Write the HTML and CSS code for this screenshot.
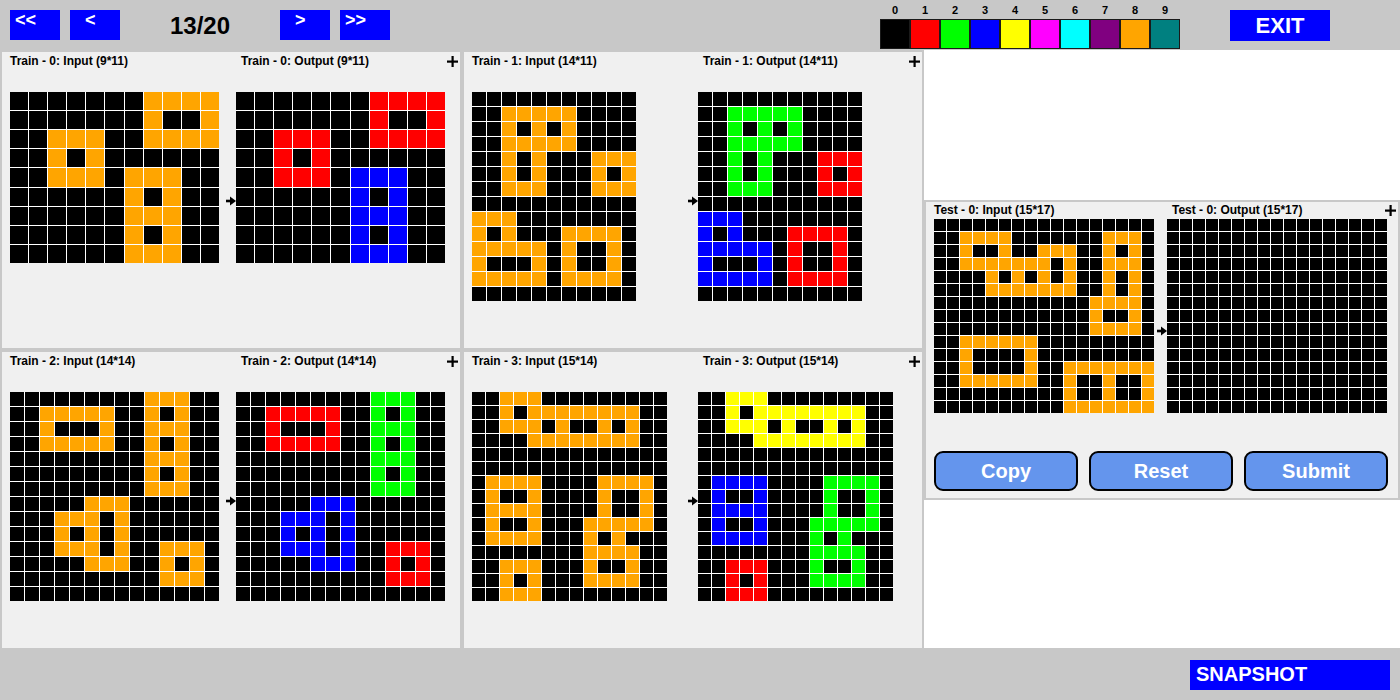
FILE: index.html
```html
<!DOCTYPE html>
<html>
<head>
<meta charset="utf-8">
<title>ARC Task 13/20</title>
<link rel="stylesheet" href="styles.css">
</head>
<body>
<div class="app">
  <header class="topbar">
    <div class="nav-btn nav-wide">&lt;&lt;</div>
    <div class="nav-btn nav-narrow">&lt;</div>
    <div class="counter">13/20</div>
    <div class="nav-btn nav-narrow">&gt;</div>
    <div class="nav-btn nav-wide">&gt;&gt;</div>
    <div class="palette">
      <div class="swatch"><span class="swatch-num">0</span><span class="swatch-box c0"></span></div>
      <div class="swatch"><span class="swatch-num">1</span><span class="swatch-box c1"></span></div>
      <div class="swatch"><span class="swatch-num">2</span><span class="swatch-box c2"></span></div>
      <div class="swatch"><span class="swatch-num">3</span><span class="swatch-box c3"></span></div>
      <div class="swatch"><span class="swatch-num">4</span><span class="swatch-box c4"></span></div>
      <div class="swatch"><span class="swatch-num">5</span><span class="swatch-box c5"></span></div>
      <div class="swatch"><span class="swatch-num">6</span><span class="swatch-box c6"></span></div>
      <div class="swatch"><span class="swatch-num">7</span><span class="swatch-box c7"></span></div>
      <div class="swatch"><span class="swatch-num">8</span><span class="swatch-box c8"></span></div>
      <div class="swatch"><span class="swatch-num">9</span><span class="swatch-box c9"></span></div>
    </div>
    <div class="exit-btn">EXIT</div>
  </header>

  <main class="main">
    <section class="train-area">
      <div class="panel">
        <div class="side side-in">
          <div class="label">Train - 0: Input (9*11)</div>
          <div class="grid" data-grid="t0i" data-size="209"></div>
        </div>
        <div class="arrow-col"><svg class="arrow" viewBox="0 0 10 10" width="10" height="10"><rect x="0" y="3.7" width="6" height="2.6"/><polygon points="4,0.5 10,5 4,9.5"/></svg></div>
        <div class="side side-out">
          <div class="label-row"><span class="label">Train - 0: Output (9*11)</span><svg class="plus" viewBox="0 0 11 11" width="11" height="11"><rect x="4.5" y="0" width="2.2" height="11"/><rect x="0" y="4.5" width="11" height="2.2"/></svg></div>
          <div class="grid" data-grid="t0o" data-size="209"></div>
        </div>
      </div>

      <div class="panel">
        <div class="side side-in">
          <div class="label">Train - 1: Input (14*11)</div>
          <div class="grid" data-grid="t1i" data-size="209"></div>
        </div>
        <div class="arrow-col"><svg class="arrow" viewBox="0 0 10 10" width="10" height="10"><rect x="0" y="3.7" width="6" height="2.6"/><polygon points="4,0.5 10,5 4,9.5"/></svg></div>
        <div class="side side-out">
          <div class="label-row"><span class="label">Train - 1: Output (14*11)</span><svg class="plus" viewBox="0 0 11 11" width="11" height="11"><rect x="4.5" y="0" width="2.2" height="11"/><rect x="0" y="4.5" width="11" height="2.2"/></svg></div>
          <div class="grid" data-grid="t1o" data-size="209"></div>
        </div>
      </div>

      <div class="panel">
        <div class="side side-in">
          <div class="label">Train - 2: Input (14*14)</div>
          <div class="grid" data-grid="t2i" data-size="209"></div>
        </div>
        <div class="arrow-col"><svg class="arrow" viewBox="0 0 10 10" width="10" height="10"><rect x="0" y="3.7" width="6" height="2.6"/><polygon points="4,0.5 10,5 4,9.5"/></svg></div>
        <div class="side side-out">
          <div class="label-row"><span class="label">Train - 2: Output (14*14)</span><svg class="plus" viewBox="0 0 11 11" width="11" height="11"><rect x="4.5" y="0" width="2.2" height="11"/><rect x="0" y="4.5" width="11" height="2.2"/></svg></div>
          <div class="grid" data-grid="t2o" data-size="209"></div>
        </div>
      </div>

      <div class="panel">
        <div class="side side-in">
          <div class="label">Train - 3: Input (15*14)</div>
          <div class="grid" data-grid="t3i" data-size="209"></div>
        </div>
        <div class="arrow-col"><svg class="arrow" viewBox="0 0 10 10" width="10" height="10"><rect x="0" y="3.7" width="6" height="2.6"/><polygon points="4,0.5 10,5 4,9.5"/></svg></div>
        <div class="side side-out">
          <div class="label-row"><span class="label">Train - 3: Output (15*14)</span><svg class="plus" viewBox="0 0 11 11" width="11" height="11"><rect x="4.5" y="0" width="2.2" height="11"/><rect x="0" y="4.5" width="11" height="2.2"/></svg></div>
          <div class="grid" data-grid="t3o" data-size="209"></div>
        </div>
      </div>
    </section>

    <aside class="test-col">
      <div class="test-panel">
        <div class="test-pair">
          <div class="side test-in">
            <div class="label">Test - 0: Input (15*17)</div>
            <div class="grid" data-grid="x0i" data-size="220"></div>
          </div>
          <div class="arrow-col test-arrow"><svg class="arrow" viewBox="0 0 10 10" width="10" height="10"><rect x="0" y="3.7" width="6" height="2.6"/><polygon points="4,0.5 10,5 4,9.5"/></svg></div>
          <div class="side side-out">
            <div class="label-row"><span class="label">Test - 0: Output (15*17)</span><svg class="plus" viewBox="0 0 11 11" width="11" height="11"><rect x="4.5" y="0" width="2.2" height="11"/><rect x="0" y="4.5" width="11" height="2.2"/></svg></div>
            <div class="grid" data-grid="x0o" data-size="220"></div>
          </div>
        </div>
        <div class="actions">
          <button class="act-btn">Copy</button>
          <button class="act-btn">Reset</button>
          <button class="act-btn">Submit</button>
        </div>
      </div>
    </aside>
  </main>

  <footer class="bottombar">
    <div class="snap-btn">SNAPSHOT</div>
  </footer>
</div>
<script src="script.js"></script>
</body>
</html>
```

FILE: styles.css
```css
* { box-sizing: border-box; }

body {
  margin: 0;
  width: 1400px;
  height: 700px;
  overflow: hidden;
  background: #c8c8c8;
  font-family: "Liberation Sans", Arial, sans-serif;
}

.app {
  display: flex;
  flex-direction: column;
  width: 1400px;
  height: 700px;
}

/* ---------- top bar ---------- */
.topbar {
  height: 50px;
  flex: none;
  display: flex;
  align-items: flex-start;
  padding-left: 10px;
}

.nav-btn {
  width: 50px;
  height: 30px;
  margin-top: 10px;
  background: #0000ff;
  color: #fff;
  font-weight: bold;
  font-size: 18px;
  line-height: 21px;
}
.nav-btn + .nav-btn { margin-left: 10px; }
.nav-wide { padding-left: 5px; }
.nav-narrow { padding-left: 15px; }

.counter {
  width: 160px;
  margin-top: 12px;
  text-align: center;
  font-weight: bold;
  font-size: 24px;
  line-height: 28px;
  color: #000;
}

.palette {
  display: flex;
  margin-left: 490px;
  margin-top: 4px;
}
.swatch {
  display: flex;
  flex-direction: column;
  align-items: center;
  width: 30px;
}
.swatch-num {
  font-size: 11px;
  font-weight: bold;
  line-height: 13px;
  height: 13px;
  margin-bottom: 2px;
  color: #000;
}
.swatch-box {
  display: block;
  width: 30px;
  height: 30px;
  border: 1px solid #1a1a1a;
}

.exit-btn {
  width: 100px;
  height: 31px;
  margin-top: 10px;
  margin-left: 50px;
  background: #0000ff;
  color: #fff;
  font-weight: bold;
  font-size: 22px;
  line-height: 31px;
  text-align: center;
}

/* ---------- main ---------- */
.main {
  height: 598px;
  flex: none;
  display: flex;
  gap: 2px;
}

.train-area {
  width: 922px;
  display: grid;
  grid-template-columns: 460px 460px;
  grid-template-rows: 298px 298px;
  gap: 2px;
}

.panel {
  display: flex;
  background: #f0f0f0;
  border-top: 2px solid #c8c8c8;
  border-left: 2px solid #c8c8c8;
  padding: 2px 2px 0 8px;
}

.side { display: flex; flex-direction: column; }
.side-in { width: 216px; }
.side-out { flex: 1; }

.label {
  font-size: 12px;
  font-weight: bold;
  line-height: 14px;
  color: #000;
  white-space: nowrap;
}
.label-row {
  display: flex;
  justify-content: space-between;
  align-items: center;
  padding-left: 5px;
}
.plus { fill: #000; display: block; }

.panel .grid { margin-top: 24px; }

.arrow-col {
  width: 10px;
  display: flex;
  align-items: center;
}
.arrow { display: block; fill: #000; }

.grid {
  display: grid;
  gap: 1px;
  background: #fff;
}
.cell { min-width: 0; min-height: 0; }

.c0 { background: #000000; }
.c1 { background: #ff0000; }
.c2 { background: #00ff00; }
.c3 { background: #0000ff; }
.c4 { background: #ffff00; }
.c5 { background: #ff00ff; }
.c6 { background: #00ffff; }
.c7 { background: #800080; }
.c8 { background: #ffa500; }
.c9 { background: #008080; }

/* ---------- test column ---------- */
.test-col {
  flex: 1;
  background: #fff;
  padding-top: 150px;
}
.test-panel {
  height: 300px;
  background: #f0f0f0;
  border: 2px solid #c8c8c8;
  padding: 1px 0 0 8px;
}
.test-pair { display: flex; }
.test-in { width: 223px; }
.test-pair .grid { margin-top: 2px; }
.test-pair .label-row { padding-right: 2px; }
.test-arrow {
  align-items: flex-start;
  padding-top: 123px;
}

.actions {
  display: flex;
  gap: 11px;
  margin-top: 38px;
}
.act-btn {
  width: 144px;
  height: 40px;
  padding: 0;
  background: #6495ed;
  border: 2px solid #000;
  border-radius: 9px;
  color: #fff;
  font-family: "Liberation Sans", Arial, sans-serif;
  font-size: 20px;
  font-weight: bold;
}

/* ---------- bottom ---------- */
.bottombar {
  flex: 1;
  display: flex;
  justify-content: flex-end;
  align-items: flex-start;
  padding: 12px 10px 0 0;
}
.snap-btn {
  width: 200px;
  height: 30px;
  background: #0000ff;
  color: #fff;
  font-weight: bold;
  font-size: 20px;
  line-height: 23px;
  padding: 3px 0 0 6px;
}
```

FILE: script.js
```js
var DATA = {
  t0i: ["00000008888","00000008008","00888008888","00808000000","00888088800","00000080800","00000088800","00000080800","00000088800"],
  t0o: ["00000001111","00000001001","00111001111","00101000000","00111033300","00000030300","00000033300","00000030300","00000033300"],
  t1i: ["00000000000","00888880000","00808080000","00888880000","00808000888","00808000808","00888000888","00000000000","88800000000","80800088880","88888080080","80008080080","88888088880","00000000000"],
  t1o: ["00000000000","00222220000","00202020000","00222220000","00202000111","00202000101","00222000111","00000000000","33300000000","30300011110","33333010010","30003010010","33333011110","00000000000"],
  t2i: ["00000000088800","00888880080800","00800080088800","00888880080800","00000000088800","00000000080800","00000000088800","00000888000000","00088808000000","00080808000000","00088808008880","00000888008080","00000000008880","00000000000000"],
  t2o: ["00000000022200","00111110020200","00100010022200","00111110020200","00000000022200","00000000020200","00000000022200","00000333000000","00033303000000","00030303000000","00033303001110","00000333001010","00000000001110","00000000000000"],
  t3i: ["00888000000000","00808888888800","00888080080800","00008888888800","00000000000000","00000000000000","08888000088880","08008000080080","08888000080080","08008000888880","08888000808000","00000000888800","00888000800800","00808000888800","00888000000000"],
  t3o: ["00444000000000","00404444444400","00444040040400","00004444444400","00000000000000","00000000000000","03333000022220","03003000020020","03333000020020","03003000222220","03333000202000","00000000222200","00111000200200","00101000222200","00111000000000"],
  x0i: ["00000000000000000","00888800000008880","00800800888008080","00888888808008880","00008080808008080","00008888888008080","00000000000088880","00000000000080080","00000000000088880","00888888000000000","00800008000000000","00800008008888888","00888888008008008","00000000008008008","00000000008888888"],
  x0o: []
};
(function () {
  var row = "";
  for (var i = 0; i < 17; i++) row += "0";
  for (var r = 0; r < 15; r++) DATA.x0o.push(row);
})();

var grids = document.querySelectorAll(".grid");
for (var g = 0; g < grids.length; g++) {
  var el = grids[g];
  var rows = DATA[el.getAttribute("data-grid")];
  var size = parseFloat(el.getAttribute("data-size"));
  var R = rows.length, C = rows[0].length;
  var cell = size / Math.max(R, C);
  el.style.width = (C * cell) + "px";
  el.style.height = (R * cell) + "px";
  el.style.gridTemplateColumns = "repeat(" + C + ", 1fr)";
  el.style.gridTemplateRows = "repeat(" + R + ", 1fr)";
  var frag = document.createDocumentFragment();
  for (var r = 0; r < R; r++) {
    for (var c = 0; c < C; c++) {
      var d = document.createElement("div");
      d.className = "cell c" + rows[r].charAt(c);
      frag.appendChild(d);
    }
  }
  el.appendChild(frag);
}
```
